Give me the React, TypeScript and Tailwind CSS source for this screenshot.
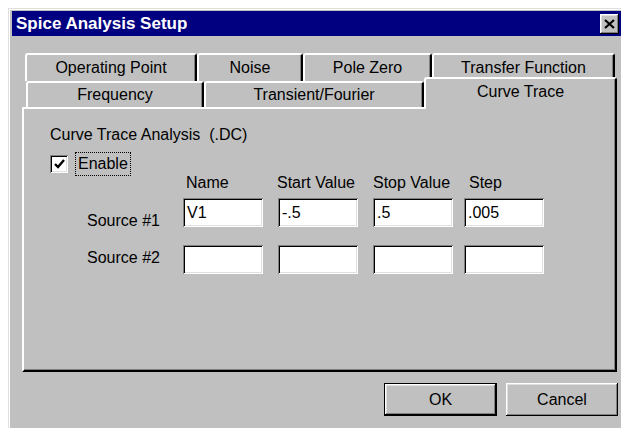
import React from "react";

// Win95-style bevels
const raised =
  "shadow-[inset_-1px_-1px_0_#000,inset_1px_1px_0_#fff,inset_-2px_-2px_0_#808080,inset_2px_2px_0_#dfdfdf]";
const sunken =
  "shadow-[inset_1px_1px_0_#808080,inset_-1px_-1px_0_#fff,inset_2px_2px_0_#000,inset_-2px_-2px_0_#dfdfdf]";

type TabProps = {
  label: string;
  className: string;
  selected?: boolean;
};

function Tab({ label, className, selected }: TabProps) {
  if (selected) {
    return (
      <div
        className={`relative z-10 -mb-[2px] flex justify-center rounded-tl-[3px] rounded-tr-[3px] border-l-2 border-t-2 border-r-2 border-l-white border-t-white border-r-black bg-[#c0c0c0] pt-[4px] shadow-[inset_-1px_0_0_#808080] ${className}`}
      >
        {label}
      </div>
    );
  }
  return (
    <div
      className={`flex items-center justify-center rounded-tl-[3px] rounded-tr-[3px] border-l-2 border-t-2 border-r-2 border-l-white border-t-white border-r-black shadow-[inset_-1px_0_0_#808080] ${className}`}
    >
      {label}
    </div>
  );
}

function Field({ value, className = "" }: { value?: string; className?: string }) {
  return (
    <div
      className={`flex h-[29px] w-[80px] items-center bg-white pl-[4px] pt-[1px] ${sunken} ${className}`}
    >
      {value}
    </div>
  );
}

function CheckBox() {
  return (
    <div className={`flex h-[18px] w-[18px] items-center justify-center bg-white ${sunken}`}>
      <svg width="11" height="10" viewBox="0 0 11 10">
        <path d="M1 5 L4 8 L10 1" fill="none" stroke="#000" strokeWidth="2.4" />
      </svg>
    </div>
  );
}

function CloseButton() {
  return (
    <div className={`mr-[3px] flex h-[20px] w-[19px] items-center justify-center bg-[#c0c0c0] ${raised}`}>
      <svg width="11" height="10" viewBox="0 0 11 10">
        <path d="M1 1 L10 9 M10 1 L1 9" stroke="#000" strokeWidth="2.2" />
      </svg>
    </div>
  );
}

export default function App() {
  return (
    <div className="h-[428px] w-[621px] overflow-hidden bg-white font-['Liberation_Sans',Arial,sans-serif] text-[16px] leading-[18px] text-black">
      <div className="ml-[8px] mt-[8px] h-[440px] w-[620px] border-l border-t border-l-[#dfdfdf] border-t-[#dfdfdf] bg-[#c0c0c0]">
        <div className="h-full border-l border-t border-white pl-[2px] pt-[1px]">
          {/* title bar */}
          <div className="flex h-[25px] w-[610px] items-center justify-between bg-[#000080]">
            <span className="pl-[4px] text-[17px] font-bold text-white">Spice Analysis Setup</span>
            <CloseButton />
          </div>

          <div className="ml-[10px] mt-[17px] w-[597px]">
            {/* tab rows */}
            <div className="flex h-[28px] pl-[3px]">
              <Tab label="Operating Point" className="w-[172px]" />
              <Tab label="Noise" className="w-[106px]" />
              <Tab label="Pole Zero" className="w-[129px]" />
              <Tab label="Transfer Function" className="w-[183px]" />
            </div>
            <div className="flex h-[26px] items-end pl-[4px]">
              <Tab label="Frequency" className="h-[26px] w-[178px]" />
              <Tab label="Transient/Fourier" className="h-[26px] w-[220px]" />
              <Tab label="Curve Trace" selected className="h-[32px] w-[193px]" />
            </div>

            {/* panel */}
            <div className="h-[265px] w-[595px] border-l-2 border-t-2 border-b-2 border-r-2 border-l-white border-t-white border-b-black border-r-black shadow-[inset_-1px_-1px_0_#808080]">
              <div className="pl-[26px] pt-[17px]">
                <div className="h-[18px]">Curve Trace Analysis&nbsp; (.DC)</div>
                <div className="mt-[8px] flex h-[24px] items-center">
                  <CheckBox />
                  <div className="ml-[7px] flex h-[24px] items-center border border-dotted border-black px-[2px]">
                    Enable
                  </div>
                </div>
                <div className="-mt-[2px] flex h-[18px]">
                  <span className="ml-[136px] w-[91px]">Name</span>
                  <span className="w-[96px]">Start Value</span>
                  <span className="w-[96px]">Stop Value</span>
                  <span>Step</span>
                </div>
                <div className="mt-[6px] flex">
                  <div className="w-[133px] pl-[37px] pt-[14px]">Source #1</div>
                  <Field value="V1" />
                  <Field value="-.5" className="ml-[15px]" />
                  <Field value=".5" className="ml-[15px]" />
                  <Field value=".005" className="ml-[11px]" />
                </div>
                <div className="mt-[15px] flex">
                  <div className="w-[133px] pl-[37px] pt-[4px]">Source #2</div>
                  <Field />
                  <Field className="ml-[15px]" />
                  <Field className="ml-[15px]" />
                  <Field className="ml-[11px]" />
                </div>
              </div>
            </div>

            {/* dialog buttons */}
            <div className="mt-[11px] flex w-[596px] justify-end gap-[9px]">
              <div className="border border-black">
                <div className={`flex h-[31px] w-[111px] items-center justify-center ${raised}`}>OK</div>
              </div>
              <div className={`flex h-[33px] w-[112px] items-center justify-center ${raised}`}>Cancel</div>
            </div>
          </div>
        </div>
      </div>
    </div>
  );
}
